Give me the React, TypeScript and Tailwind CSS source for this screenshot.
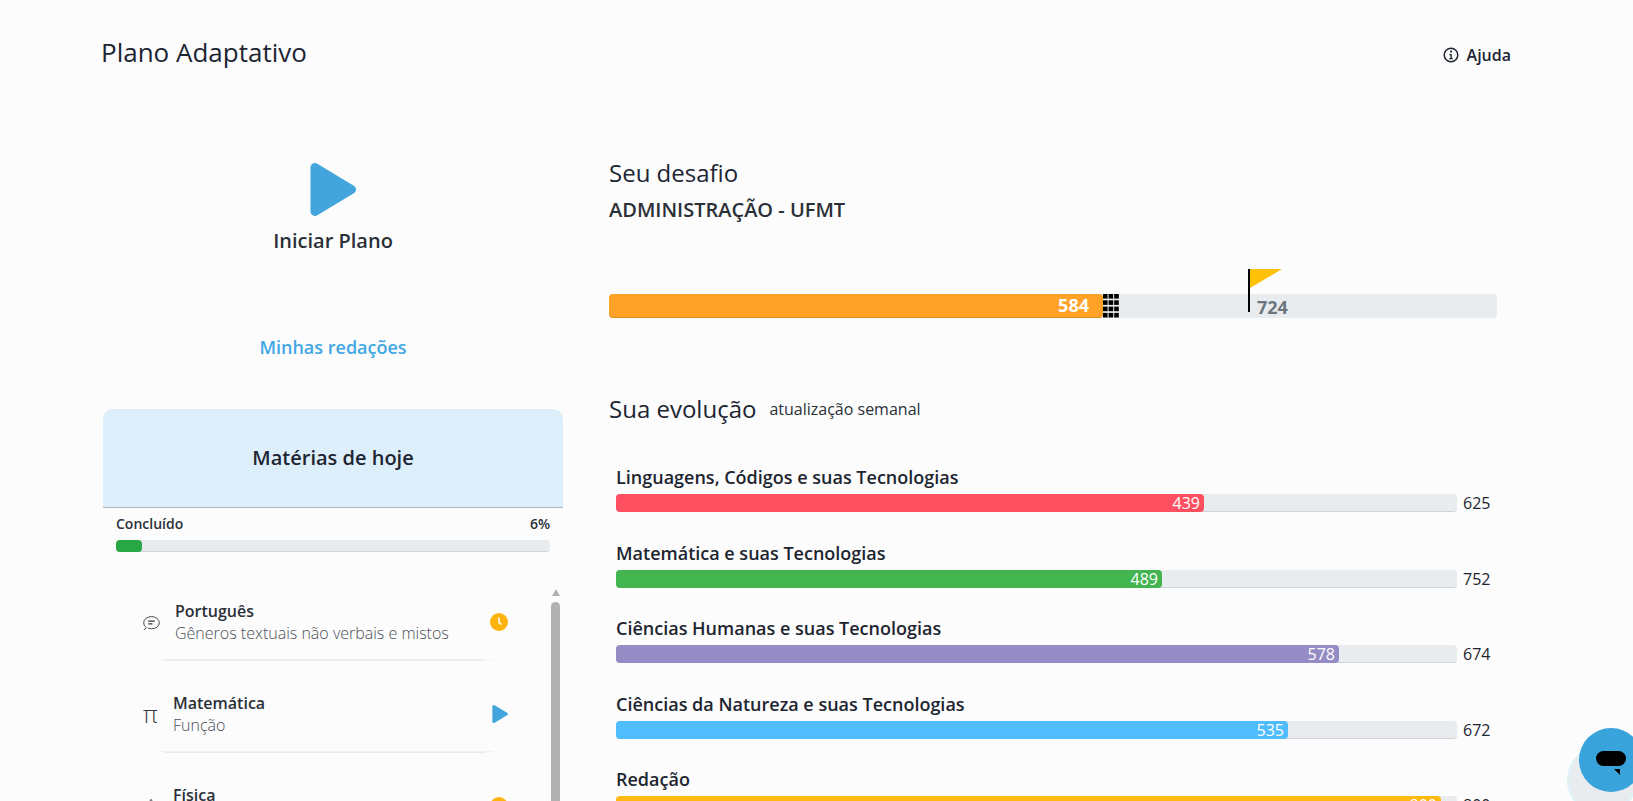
const rows = [
  { name: "Linguagens, Códigos e suas Tecnologias", v: 439, t: 625, w: 588, c: "bg-[#ff5062]" },
  { name: "Matemática e suas Tecnologias", v: 489, t: 752, w: 546, c: "bg-[#42b551]" },
  { name: "Ciências Humanas e suas Tecnologias", v: 578, t: 674, w: 723, c: "bg-[#958bc5]" },
  { name: "Ciências da Natureza e suas Tecnologias", v: 535, t: 672, w: 672, c: "bg-[#4fbcfd]" },
  { name: "Redação", v: 800, t: 800, w: 825, c: "bg-[#ffb911]" },
];

function Play({ className }: { className: string }) {
  return (
    <svg viewBox="0 0 46 53" className={className}>
      <path d="M5 4.500 L41.500 26.500 L5 48.500 Z" fill="#42a5dc" stroke="#42a5dc" strokeWidth="9" strokeLinejoin="round" />
    </svg>
  );
}

function Clock({ className }: { className: string }) {
  return (
    <svg viewBox="0 0 18 18" className={className}>
      <circle cx="9" cy="9" r="9" fill="#ffb30f" />
      <path d="M9 4.500 V9.500 L11.500 11.500" fill="none" stroke="#fff" strokeWidth="1.600" />
    </svg>
  );
}

function GridIcon() {
  const cells = [];
  for (let y = 0; y < 4; y++) {
    for (let x = 0; x < 3; x++) {
      cells.push(<rect key={`${x}-${y}`} x={x * 5.600} y={y * 6.300} width="4.600" height="4.600" fill="#000" />);
    }
  }
  return (
    <svg className="absolute left-[494px] top-0 w-[16px] h-[24px]" viewBox="0 0 16 24">
      {cells}
    </svg>
  );
}

function Subject({ icon, name, sub, right, gap, line = true }: { icon: React.ReactNode; name: string; sub: string; right: React.ReactNode; gap: string; line?: boolean }) {
  return (
    <div className="h-[92px] relative pt-[32px]">
      <div className="flex items-center h-[44px] pl-[40px] pr-[43px]">
        <div className={`${gap} shrink-0 flex items-center`}>{icon}</div>
        <div className="flex-1 min-w-0">
          <div className="text-[16px] leading-[22px] font-semibold text-[#2b3038]">{name}</div>
          <div className="text-[16px] leading-[22px] font-light text-[#4b5058] whitespace-nowrap">{sub}</div>
        </div>
        <div className="w-[18px] shrink-0 flex justify-end">{right}</div>
      </div>
      {line && (
        <>
          <div className="absolute bottom-0 left-[55px] w-[335px] h-[1px] bg-[#f0f2f4]" />
          <div className="absolute bottom-[-1px] left-[62px] w-[321px] h-[1px] bg-[#e9ecef]" />
        </>
      )}
    </div>
  );
}

export default function App() {
  return (
    <div className="h-[801px] overflow-hidden bg-[#fcfcfc] text-[#1d2530] relative" style={{ fontFamily: '"Open Sans", sans-serif' }}>
      <div className="flex justify-between items-start pl-[101px] pr-[122px] h-[70px]">
        <div className="pt-[34px] text-[26px] leading-[36px] text-[#1d2533]">Plano Adaptativo</div>
        <div className="pt-[43px] flex items-center gap-[8px] text-[16px] leading-[24px] font-semibold text-[#1d2533]">
          <svg viewBox="0 0 16 16" className="w-[16px] h-[16px]" fill="none">
            <circle cx="8" cy="8" r="6.800" stroke="#1d2533" strokeWidth="1.500" />
            <rect x="7.100" y="3.600" width="1.900" height="1.900" fill="#1d2533" />
            <path d="M6.400 7h2.400v4h1v1.200H6.400V11h1V8.200h-1z" fill="#1d2533" />
          </svg>
          Ajuda
        </div>
      </div>

      <div className="flex pl-[103px] pt-[70px]">
        <div className="w-[460px] shrink-0">
          <div className="flex flex-col items-center pt-[23px]">
            <Play className="w-[46px] h-[53px]" />
            <div className="mt-[11px] text-[20px] leading-[28px] font-semibold text-[#2b3038]">Iniciar Plano</div>
            <div className="mt-[79px] text-[18px] leading-[26px] font-semibold text-[#40a7e3]">Minhas redações</div>
          </div>
          <div className="mt-[49px] h-[99px] rounded-t-[10px] bg-[#ddeffa] border-b border-[#adb5bd] flex items-center justify-center text-[20px] font-semibold text-[#1d2533]">
            Matérias de hoje
          </div>
          <div className="px-[13px] pt-[6px]">
            <div className="flex justify-between text-[14px] leading-[20px] font-semibold text-[#2b3038]">
              <span>Concluído</span>
              <span>6%</span>
            </div>
            <div className="mt-[6px] h-[12px] bg-[#e9ecef] rounded-[4px] border-b border-[#ced4da]">
              <div className="h-[12px] w-[26px] bg-[#28a745] rounded-[4px]" />
            </div>
          </div>
          <div className="flex mt-[16px]">
            <div className="w-[448px] shrink-0">
              <Subject gap="w-[32px]" name="Português" sub="Gêneros textuais não verbais e mistos"
                icon={
                  <svg viewBox="0 0 18 18" className="w-[17px] h-[17px]" fill="none" stroke="#343a40" strokeWidth="1">
                    <path d="M1 16.500 c1.200-.4 2-1 2.600-1.900 C1.800 13.200.8 11.300.8 9.300.8 5.600 4.400 2.800 9 2.800 s8.200 2.800 8.200 6.500 -3.600 6.300 -8.200 6.300 c-1.400 0-2.600-.2-3.700-.7" />
                    <path d="M5.500 7.600h7M5.500 10.400h4.500" strokeWidth="1.300" />
                  </svg>
                }
                right={<Clock className="w-[18px] h-[18px]" />} />
              <Subject gap="w-[30px]" name="Matemática" sub="Função"
                icon={<span className="text-[24px] leading-none font-light text-[#343a40]">π</span>}
                right={<Play className="w-[16px] h-[18px]" />} />
              <Subject gap="w-[30px]" name="Física" sub="Movimento" line={false}
                icon={
                  <svg viewBox="0 0 18 18" className="w-[16px] h-[16px]" fill="none" stroke="#343a40" strokeWidth="1">
                    <path d="M9 1.500 C6.500 5 5 8 5 11 a4 4 0 0 0 8 0 C13 8 11.500 5 9 1.500Z" />
                  </svg>
                }
                right={<Clock className="w-[18px] h-[18px]" />} />
            </div>
            <div className="w-[9px] shrink-0 flex flex-col items-center pt-[21px]">
              <div className="w-0 h-0 border-x-[4.500px] border-x-transparent border-b-[7px] border-b-[#b0b0b0]" />
              <div className="mt-[6px] w-[9px] h-[400px] shrink-0 rounded-t-[5px] bg-[#b0b0b0]" />
            </div>
          </div>
        </div>

        <div className="ml-[46px] w-[888px] shrink-0">
          <div className="pt-[17px] text-[24px] leading-[32px] text-[#1d2533]">Seu desafio</div>
          <div className="mt-[7px] text-[20px] leading-[28px] font-semibold text-[#2b3038]">ADMINISTRAÇÃO - UFMT</div>
          <div className="mt-[70px] relative h-[24px] bg-[#e9ecef] rounded-[4px]">
            <div className="h-[24px] w-[494px] bg-[#ffa227] rounded-[4px] border-b border-[#e38c16] flex items-center justify-end pr-[14px] text-[18px] font-bold text-white">584</div>
            <GridIcon />
            <svg className="absolute left-[639px] top-[-25px] w-[36px] h-[43px]" viewBox="0 0 36 43">
              <path d="M1 0V43" stroke="#000" strokeWidth="2" />
              <path d="M2 0H34L2 19Z" fill="#ffc107" />
            </svg>
            <div className="absolute left-[648px] top-[1px] h-[24px] flex items-center text-[18px] font-bold text-[#6c757d]">724</div>
          </div>

          <div className="mt-[75px] flex items-center gap-[13px]">
            <span className="text-[24px] leading-[32px] text-[#1d2533]">Sua evolução</span>
            <span className="text-[16px] leading-[24px] text-[#2b3038]">atualização semanal</span>
          </div>

          <div className="mt-[39px] pl-[7px]">
            {rows.map((r) => (
              <div key={r.name} className="h-[75.600px]">
                <div className="text-[18px] leading-[26px] font-semibold text-[#1d2530] whitespace-nowrap">{r.name}</div>
                <div className="flex items-center mt-[1px]">
                  <div className="w-[841px] h-[18px] bg-[#e9ecef] rounded-[4px] border-b border-[#ced4da] shrink-0">
                    <div className={`h-[18px] ${r.c} rounded-[4px] flex items-center justify-end pr-[4px] text-[16px] leading-none text-white`} style={{ width: r.w }}>{r.v}</div>
                  </div>
                  <span className="ml-[6px] text-[16px] text-[#1d2530]">{r.t}</span>
                </div>
              </div>
            ))}
          </div>
        </div>
      </div>

      <div className="absolute left-[1567px] top-[745px] w-[70px] h-[70px] rounded-full bg-[#e9ecef] border-[2px] border-[#dff1f9]" />
      <div className="absolute left-[1579px] top-[728px] w-[64px] h-[64px] rounded-full bg-[#39a3dc]">
        <div className="absolute left-[17px] top-[23px] w-[30px] h-[15px] rounded-full bg-black" />
        <svg className="absolute left-[35px] top-[41px] w-[6px] h-[6px]" viewBox="0 0 6 6"><path d="M0 0H6V6Z" fill="#000" /></svg>
      </div>
    </div>
  );
}
